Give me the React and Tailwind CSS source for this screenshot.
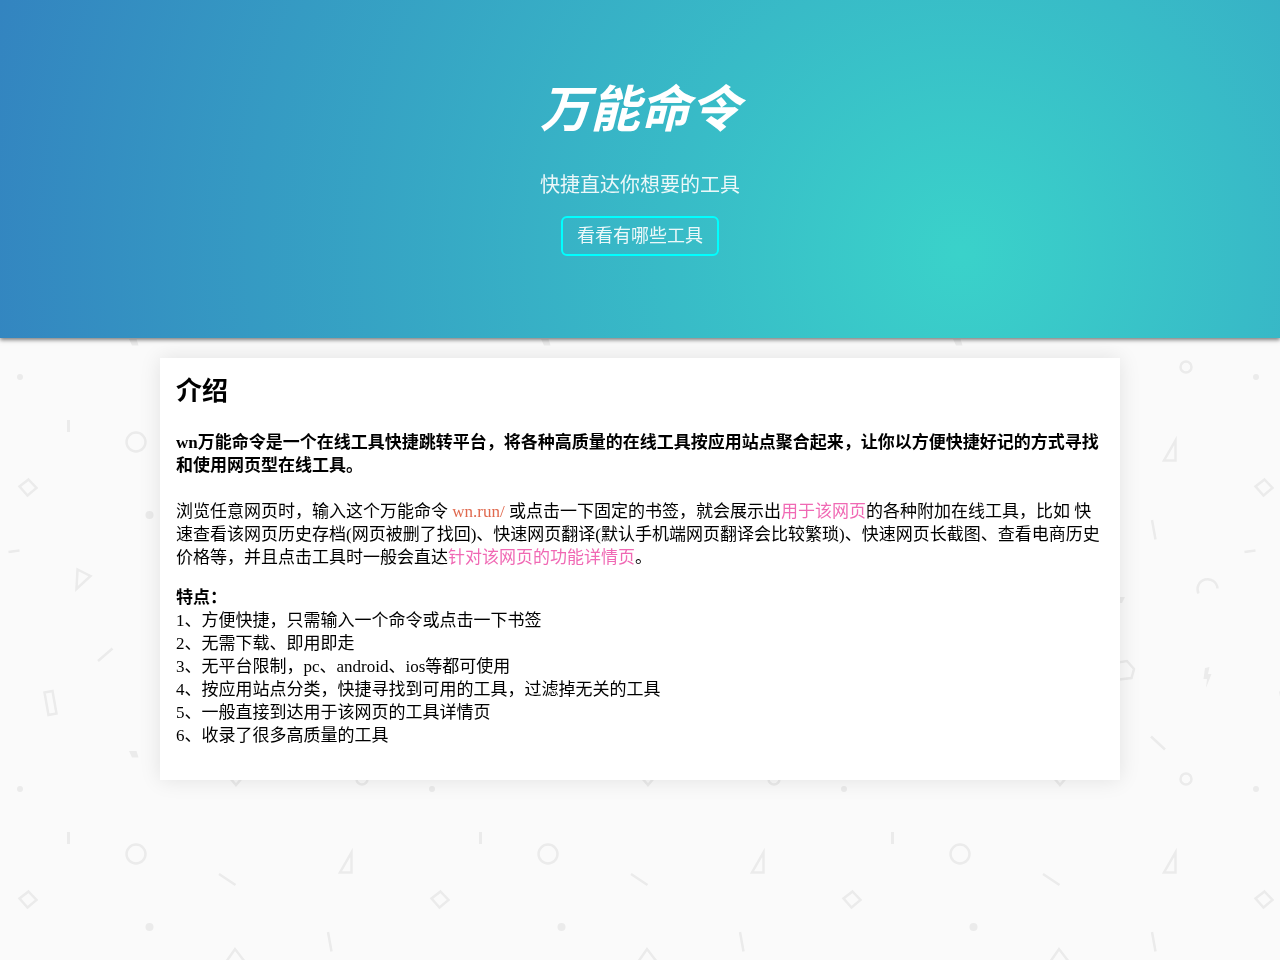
const features = [
  "方便快捷，只需输入一个命令或点击一下书签",
  "无需下载、即用即走",
  "无平台限制，pc、android、ios等都可使用",
  "按应用站点分类，快捷寻找到可用的工具，过滤掉无关的工具",
  "一般直接到达用于该网页的工具详情页",
  "收录了很多高质量的工具",
];

function PatternBackground() {
  return (
    <svg aria-hidden="true" className="fixed inset-0 -z-10 h-full w-full bg-[#fafafa]">
      <defs>
        <pattern id="shapes" width="412" height="412" patternUnits="userSpaceOnUse">
          <g fill="#ebebeb">
            <circle cx="20" cy="377" r="3" />
            <circle cx="149.5" cy="103" r="4" />
            <path d="M129 339h7.500l2 6.500h-6.500z" />
            <path d="M296 185h5l-3 6h-2z" />
            <path d="M381 256l4.5-1-1.5 7h3.500l-5.500 14 1-9h-3.500z" />
          </g>
          <g fill="none" stroke="#ebebeb" strokeWidth="2.5">
            <path strokeWidth="3" d="M68.500 8v12" />
            <circle cx="136" cy="30" r="9.500" />
            <path d="M28.500 67.500l8 8.500-9 7.500-8-9z" />
            <path d="M8.500 140l11-1.500" />
            <path d="M77.500 157.500l13 6.500-14 13z" />
            <path d="M98 249l14.500-12.500" />
            <path d="M44.500 280.500l8-1.500 4 22.500-8 1.500z" />
            <circle cx="362" cy="367" r="5.500" />
            <path d="M351.500 28.500v20H340z" />
            <path d="M328 108l3.500 19.500" />
            <path d="M374.500 181.500a10 10 0 1 1 19-5" />
            <path d="M290 251l13-2 7 8-2.500 9-12.500 1.500" />
            <path d="M327 324.500l14 13" />
            <path d="M219 50l16.500 11" />
            <path d="M226 138l9-13 10 13" />
            <path d="M230 366l6 7 6-7" />
          </g>
        </pattern>
      </defs>
      <rect width="100%" height="100%" fill="url(#shapes)" />
    </svg>
  );
}

function Hero() {
  return (
    <header className="flex flex-col items-center bg-[radial-gradient(circle_at_75%_75%,#3ad2ca,#3384c0)] pt-[73px] pb-[82px] text-white shadow-[0_2px_4px_rgba(0,0,0,0.5)]">
      <h1 className="text-[50px] leading-[74px] font-bold italic">万能命令</h1>
      <p className="mt-6 text-xl leading-7 opacity-90">快捷直达你想要的工具</p>
      <a
        href="#tools"
        className="mt-[17px] rounded-md border-2 border-[#00ffff] px-3.5 text-lg leading-9 text-white/90"
      >
        看看有哪些工具
      </a>
    </header>
  );
}

export default function App() {
  return (
    <div className="font-['Liberation_Serif','Noto_Sans_CJK_SC',serif]" lang="zh-CN">
      <PatternBackground />
      <Hero />
      <main className="mx-auto my-5 max-w-[960px] bg-white px-4 pt-4 pb-[33px] text-[17px] leading-[23px] text-black shadow-[0_0_20px_rgba(0,0,0,0.1)]">
        <h2 className="mb-[21px] text-[26px] leading-9 font-bold">介绍</h2>
        <p className="mb-[23px] font-bold">
          wn万能命令是一个在线工具快捷跳转平台，将各种高质量的在线工具按应用站点聚合起来，让你以方便快捷好记的方式寻找和使用网页型在线工具。
        </p>
        <p className="mb-[17px]">
          浏览任意网页时，输入这个万能命令 <span className="text-[#e0694e]">wn.run/</span>{" "}
          或点击一下固定的书签，就会展示出<span className="text-[#f069b4]">用于该网页</span>
          的各种附加在线工具，比如
          快速查看该网页历史存档(网页被删了找回)、快速网页翻译(默认手机端网页翻译会比较繁琐)、快速网页长截图、查看电商历史价格等，并且点击工具时一般会直达
          <span className="text-[#f069b4]">针对该网页的功能详情页</span>。
        </p>
        <h3 className="font-bold">特点：</h3>
        <ol>
          {features.map((feature, index) => (
            <li key={feature}>
              {index + 1}、{feature}
            </li>
          ))}
        </ol>
      </main>
    </div>
  );
}
